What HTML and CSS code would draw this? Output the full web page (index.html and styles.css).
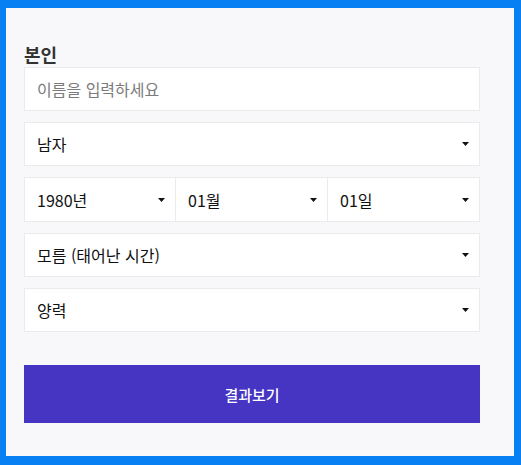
FILE: index.html
```html
<!DOCTYPE html>
<html lang="ko">
<head>
<meta charset="utf-8">
<link rel="stylesheet" href="styles.css">
</head>
<body>
<div class="panel">
  <h2 class="title">본인</h2>
  <div class="fields">
    <div class="field"><span class="placeholder">이름을 입력하세요</span></div>
    <div class="field select"><span class="value">남자</span><svg class="caret" width="7" height="4" viewBox="0 0 7 4"><path d="M0 0H7L3.5 4Z"/></svg></div>
    <div class="row3">
      <div class="field select"><span class="value">1980년</span><svg class="caret" width="7" height="4" viewBox="0 0 7 4"><path d="M0 0H7L3.5 4Z"/></svg></div>
      <div class="field select"><span class="value">01월</span><svg class="caret" width="7" height="4" viewBox="0 0 7 4"><path d="M0 0H7L3.5 4Z"/></svg></div>
      <div class="field select"><span class="value">01일</span><svg class="caret" width="7" height="4" viewBox="0 0 7 4"><path d="M0 0H7L3.5 4Z"/></svg></div>
    </div>
    <div class="field select"><span class="value">모름 (태어난 시간)</span><svg class="caret" width="7" height="4" viewBox="0 0 7 4"><path d="M0 0H7L3.5 4Z"/></svg></div>
    <div class="field select"><span class="value">양력</span><svg class="caret" width="7" height="4" viewBox="0 0 7 4"><path d="M0 0H7L3.5 4Z"/></svg></div>
  </div>
  <button class="submit">결과보기</button>
</div>
</body>
</html>
```
FILE: styles.css
```css
html, body {
  margin: 0;
  padding: 0;
}
body {
  background: #0680f2;
  font-family: "Noto Sans CJK KR", "Noto Sans", sans-serif;
  width: 521px;
  height: 465px;
  overflow: hidden;
}
.panel {
  margin: 8px 7px 9px 6px;
  height: 448px;
  box-sizing: border-box;
  background: #f8f8fa;
  padding: 33px 34px 0 18px;
}
.title {
  margin: 0;
  font-size: 18px;
  line-height: 26px;
  font-weight: 700;
  color: #333;
}
.fields {
  display: flex;
  flex-direction: column;
  gap: 11px;
}
.field {
  height: 44px;
  box-sizing: border-box;
  border: 1px solid #ebebed;
  background: #fff;
  display: flex;
  align-items: center;
  padding: 0 10px 0 12px;
  font-size: 16px;
  color: #111;
}
.placeholder {
  color: #7b7b7b;
}
.value {
  flex: 1;
}
.caret {
  fill: #111;
  flex: none;
}
.row3 {
  display: grid;
  grid-template-columns: 1fr 1fr 1fr;
}
.row3 .field {
  height: 45px;
}
.row3 .field + .field {
  border-left: none;
}
.submit {
  display: block;
  width: 100%;
  height: 58px;
  margin-top: 33px;
  border: none;
  background: #4535c2;
  color: #fff;
  font-family: inherit;
  font-size: 15px;
  font-weight: 500;
}
```
